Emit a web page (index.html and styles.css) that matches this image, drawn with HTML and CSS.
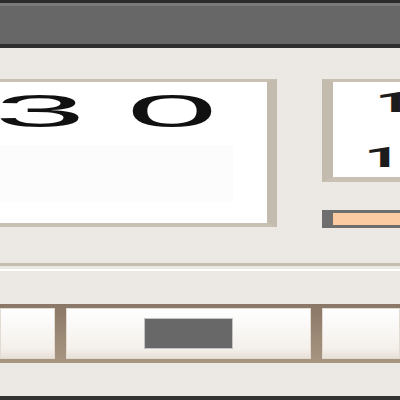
FILE: index.html
```html
<!DOCTYPE html>
<html lang="en">
<head>
  <meta charset="UTF-8" />
  <meta name="viewport" content="width=device-width, initial-scale=1.0"/>
  <title>Calculator</title>
  <link rel="stylesheet" href="styles.css">
</head>
<body>

  <!-- title bar -->
  <header class="titlebar"></header>

  <main class="panel">
    <div class="display-row">
      <!-- main display -->
      <section class="display">
        <div class="digits">
          <span class="digit"><span>3</span></span>
          <span class="digit"><span>0</span></span>
        </div>
        <div class="memo"></div>
      </section>

      <!-- side counter + meter -->
      <aside class="side">
        <div class="counter">
          <div class="count count-top"><span>1</span></div>
          <div class="count"><span>1</span></div>
        </div>
        <div class="meter"><div class="meter-fill"></div></div>
      </aside>
    </div>

    <hr class="divider">

    <!-- key row -->
    <div class="keys">
      <button class="key key-small"></button>
      <button class="key key-wide"><span class="key-label"></span></button>
      <button class="key key-rest"></button>
    </div>
  </main>

  <footer class="statusbar"></footer>

</body>
</html>
```

FILE: styles.css
```css
html, body {
  margin: 0;
  padding: 0;
  height: 400px;
  overflow: hidden;
}

body {
  width: 400px;
  display: flex;
  flex-direction: column;
  background-color: #ece9e4;
  font-family: "Liberation Sans", Arial, sans-serif;
  color: #111;
}

.titlebar {
  height: 41px;
  flex: none;
  background-color: #676767;
  border-top: 3px solid #2b2b2b;
  border-bottom: 4px solid #2f2f2f;
  box-shadow: inset 0 3px 0 #7a7a7a;
}

.panel {
  flex: 1;
  padding-top: 31px;
  overflow: hidden;
}

.display-row {
  display: flex;
  gap: 45px;
}

.display {
  flex: none;
  width: 267px;
  height: 141px;
  background-color: #fff;
  border-top: 3px solid #c9c1b3;
  border-bottom: 4px solid #c9c1b3;
  border-right: 10px solid #c3bbad;
}

.digits {
  display: flex;
  gap: 52px;
  padding-top: 5px;
  font-size: 47px;
  line-height: 47px;
}

.digit {
  width: 80px;
  display: flex;
  justify-content: center;
}

.digit span {
  display: inline-block;
  transform: scaleX(3.5);
}

.memo {
  margin-top: 11px;
  width: 233px;
  height: 57px;
  background-color: #fcfcfc;
}

.side {
  flex: 1;
  min-width: 0;
}

.counter {
  height: 95px;
  background-color: #fff;
  border-top: 3px solid #c9c1b3;
  border-bottom: 5px solid #c9c1b3;
  border-left: 11px solid #c3bbad;
}

.count {
  font-family: Roboto, "Liberation Sans", sans-serif;
  font-size: 28px;
  line-height: 28px;
  font-weight: bold;
  color: #1c1c1c;
  padding-left: 31px;
}

.count span {
  display: inline-block;
  transform: scaleX(2.3);
  transform-origin: left;
}

.count-top {
  padding-top: 7px;
  padding-left: 42px;
  margin-bottom: 27px;
}

.meter {
  margin-top: 28px;
  height: 12px;
  background-color: #fccba1;
  border: 3px solid #6e6e6e;
  border-left-width: 11px;
  border-right: none;
}

.divider {
  margin: 35px 0 0 0;
  height: 3px;
  border: none;
  border-top: 3px solid #c5bdb0;
  border-bottom: 2px solid #fff;
}

.keys {
  margin-top: 33px;
  display: flex;
  gap: 11px;
  padding: 4px 0;
  background: linear-gradient(#8a7767, #a99681);
}

.key {
  height: 51px;
  margin: 0;
  padding: 0;
  border: 1px solid #e2dbd2;
  background: linear-gradient(#ffffff, #f4f0eb 80%, #e8e1d8);
  display: flex;
  align-items: center;
  justify-content: center;
}

.key-small {
  width: 55px;
}

.key-wide {
  width: 245px;
}

.key-rest {
  flex: 1;
}

.key-label {
  width: 87px;
  height: 29px;
  background-color: #686868;
  border: 1px solid #c4c4c4;
}

.statusbar {
  height: 4px;
  flex: none;
  background-color: #333;
}
```
